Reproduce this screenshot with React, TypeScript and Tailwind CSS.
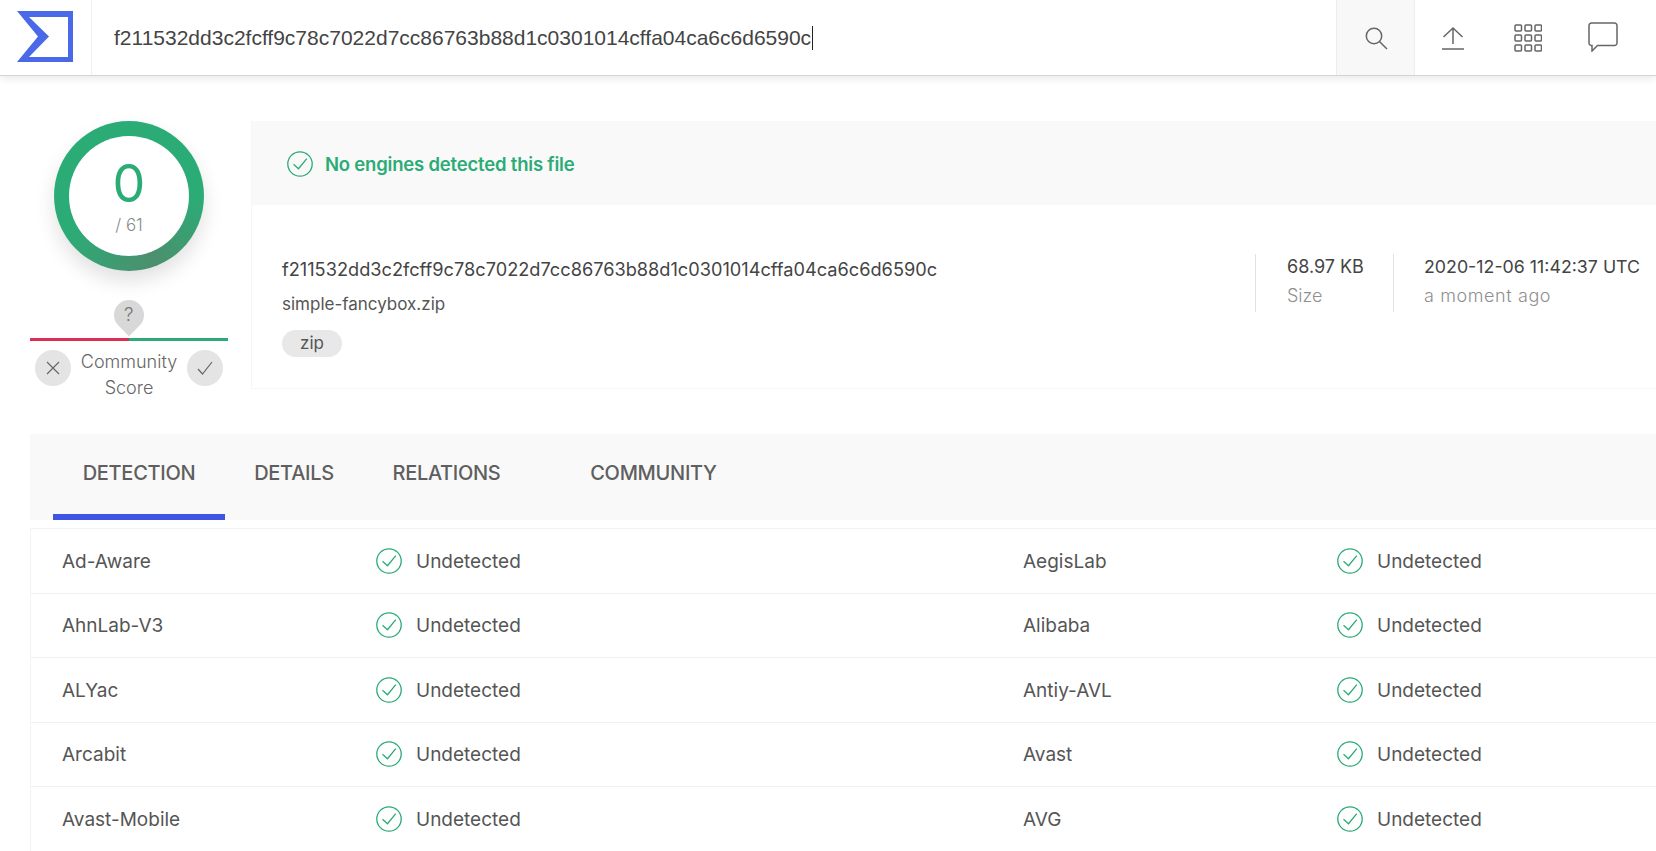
const HASH = 'f211532dd3c2fcff9c78c7022d7cc86763b88d1c0301014cffa04ca6c6d6590c';

const ROWS = [
  ['Ad-Aware', 'AegisLab'],
  ['AhnLab-V3', 'Alibaba'],
  ['ALYac', 'Antiy-AVL'],
  ['Arcabit', 'Avast'],
  ['Avast-Mobile', 'AVG'],
];

function CheckCircle({ size = 26 }: { size?: number }) {
  return (
    <svg width={size} height={size} viewBox="0 0 26 26" fill="none" stroke="#2bac76" strokeWidth="1.3">
      <circle cx="13" cy="13" r="12.2" />
      <path d="M6.500 13.300l5 4.400 8.300-10" strokeWidth="1.3" />
    </svg>
  );
}

function Logo() {
  return (
    <svg width="56" height="51" viewBox="0 0 56 51" fill="none">
      <path d="M0 0H56V51H0L21 25.500Z M12 6L32 25.500L12 46H51V6Z" fill="#4a69e8" fillRule="evenodd" />
    </svg>
  );
}

function Header() {
  return (
    <header className="relative z-10 flex h-[76px] items-stretch border-b border-[#d4d4d4] bg-white pr-[16px] shadow-[0_2px_8px_rgba(0,0,0,0.1)]">
      <div className="flex w-[92px] items-center justify-start border-r border-[#efefef] pb-[2px] pl-[17px]">
        <Logo />
      </div>
      <div className="flex flex-1 items-center pl-[22px] font-['Liberation_Sans',sans-serif] text-[21px] text-[#444]">
        {HASH}
        <span className="ml-px h-[24px] w-px bg-[#222]" />
      </div>
      <div className="flex w-[79px] items-center justify-center border-x border-[#ececec] bg-[#f8f8f8]">
        <svg width="24" height="24" viewBox="0 0 24 24" fill="none" stroke="#666" strokeWidth="1.5">
          <circle cx="10" cy="10" r="7.700" />
          <path d="M15.500 15.500L23 23" />
        </svg>
      </div>
      <div className="flex w-[75px] items-center justify-center">
        <svg width="24" height="24" viewBox="0 0 24 24" fill="none" stroke="#666" strokeWidth="1.5">
          <path d="M1 23H23M12 18V2M2.500 11L12 2L21.500 11" />
        </svg>
      </div>
      <div className="flex w-[75px] items-center justify-center">
        <svg width="28" height="28" viewBox="0 0 28 28" fill="none" stroke="#666" strokeWidth="1.500">
          {[1, 11, 21].flatMap((y) =>
            [1, 11, 21].map((x) => <rect key={`${x}-${y}`} x={x} y={y} width="6.500" height="6" rx="1" />),
          )}
        </svg>
      </div>
      <div className="flex w-[75px] items-center justify-center pb-[2px]">
        <svg width="30" height="30" viewBox="0 0 30 30" fill="none" stroke="#666" strokeWidth="1.500">
          <path d="M3.500 1H26.500A2.500 2.500 0 0 1 29 3.500V21A2.500 2.500 0 0 1 26.500 23.500H9.500L4 29V23.500H3.500A2.500 2.500 0 0 1 1 21V3.500A2.500 2.500 0 0 1 3.500 1Z" />
        </svg>
      </div>
    </header>
  );
}

function ScoreColumn() {
  return (
    <div className="w-[228px] shrink-0 pl-[30px]">
      <div className="mx-auto flex h-[150px] w-[150px] items-center justify-center rounded-full bg-[conic-gradient(from_90deg,#2bac76_0deg,#4c8f6e_70deg,#2bac76_150deg,#2bac76_360deg)] shadow-[0_10px_20px_rgba(0,0,0,0.12)]">
        <div className="flex h-[120px] w-[120px] flex-col items-center rounded-full bg-white">
          <span className="mt-[17px] text-[52px] leading-[62px] font-normal text-[#2bac76]">0</span>
          <span className="-mt-[1px] text-[17px] leading-[22px] font-light text-[#8a8a8a]">/ 61</span>
        </div>
      </div>
      <div className="relative mt-[67px] flex h-[3px] w-[198px]">
        <div className="w-1/2 bg-[#dc2f55]" />
        <div className="w-1/2 bg-[#2bac76]" />
        <div className="absolute bottom-[11px] left-[84px] flex h-[30px] w-[30px] rotate-45 items-center justify-center rounded-[50%_50%_0_50%] bg-[#d8d8d8]">
          <span className="-rotate-45 text-[19px] font-light text-[#777]">?</span>
        </div>
      </div>
      <div className="mt-[6px] flex w-[198px] justify-between px-[5px]">
        <div className="mt-[3px] flex h-[36px] w-[36px] items-center justify-center rounded-full bg-[#e4e4e4]">
          <svg width="14" height="14" viewBox="0 0 14 14" stroke="#666" strokeWidth="1.200">
            <path d="M1 1L13 13M13 1L1 13" />
          </svg>
        </div>
        <div className="mt-[2px] text-center text-[18px] leading-[26px] font-light text-[#666]">
          Community
          <br />
          Score
        </div>
        <div className="mt-[3px] flex h-[36px] w-[36px] items-center justify-center rounded-full bg-[#e4e4e4]">
          <svg width="16" height="14" viewBox="0 0 16 14" fill="none" stroke="#666" strokeWidth="1.200">
            <path d="M1 8L5.500 13L15 1" />
          </svg>
        </div>
      </div>
    </div>
  );
}

function Summary() {
  return (
    <div className="ml-[23px] h-[268px] flex-1 border-b border-l border-[#f6f6f6]">
      <div className="flex h-[84px] items-center gap-[12px] bg-[#f9f9f9] pt-[2px] pl-[35px]">
        <CheckCircle />
        <span className="pt-[2px] text-[18.500px] font-semibold tracking-[-0.2px] text-[#2bac76]">No engines detected this file</span>
      </div>
      <div className="flex pt-[47px] pl-[30px]">
        <div className="w-[973px] shrink-0">
          <div className="mt-[5px] text-[18.200px] leading-[24px] text-[#444]">{HASH}</div>
          <div className="mt-[11px] text-[17px] leading-[24px] text-[#555]">simple-fancybox.zip</div>
          <div className="mt-[14px] flex h-[27px] w-[60px] items-center justify-center rounded-full bg-[#e8e8e8] text-[17px] text-[#555]">
            zip
          </div>
        </div>
        <div className="mt-[2px] h-[58px] w-[138px] border-l border-[#e2e2e2] pl-[31px]">
          <div className="-mt-[2px] text-[18px] leading-[30px] text-[#444]">68.97 KB</div>
          <div className="text-[18px] leading-[28px] font-light text-[#8f8f8f]">Size</div>
        </div>
        <div className="mt-[2px] h-[58px] border-l border-[#e2e2e2] pl-[30px] whitespace-nowrap">
          <div className="-mt-[2px] text-[17.800px] leading-[30px] text-[#444]">2020-12-06 11:42:37 UTC</div>
          <div className="text-[18px] leading-[28px] font-light tracking-[0.6px] text-[#8f8f8f]">a moment ago</div>
        </div>
      </div>
    </div>
  );
}

function Tabs() {
  return (
    <div className="ml-[30px] flex h-[86px] bg-[#f9f9f9] pl-[23px] text-[20px] font-medium tracking-[-0.3px] text-[#5f5f5f]">
      <div className="flex w-[172px] items-center justify-center border-b-[6px] border-[#3f55e3] pb-[2px]">DETECTION</div>
      <div className="ml-[30px] flex w-[78px] items-center justify-center pb-[8px]">DETAILS</div>
      <div className="ml-[60px] flex w-[107px] items-center justify-center pb-[8px]">RELATIONS</div>
      <div className="ml-[90px] flex w-[127px] items-center justify-center pb-[8px]">COMMUNITY</div>
    </div>
  );
}

function EngineResult({ name }: { name: string }) {
  return (
    <div className="flex w-[961px] shrink-0 items-center text-[19px] text-[#555]">
      <span className="w-[345px] pt-[2px] pl-[31px]">{name}</span>
      <CheckCircle />
      <span className="ml-[14px] pt-[2px]">Undetected</span>
    </div>
  );
}

export default function App() {
  return (
    <div className="h-[851px] w-[1656px] overflow-hidden bg-white font-['Inter',sans-serif]">
      <Header />
      <main className="pt-[45px]">
        <div className="flex h-[313px]">
          <ScoreColumn />
          <Summary />
        </div>
        <Tabs />
        <div className="mt-[8px] ml-[30px] border-t border-l border-[#f2f2f2]">
          {ROWS.map(([a, b]) => (
            <div key={a} className="flex h-[64.500px] border-b border-[#f0f0f0]">
              <EngineResult name={a} />
              <EngineResult name={b} />
            </div>
          ))}
        </div>
      </main>
    </div>
  );
}
